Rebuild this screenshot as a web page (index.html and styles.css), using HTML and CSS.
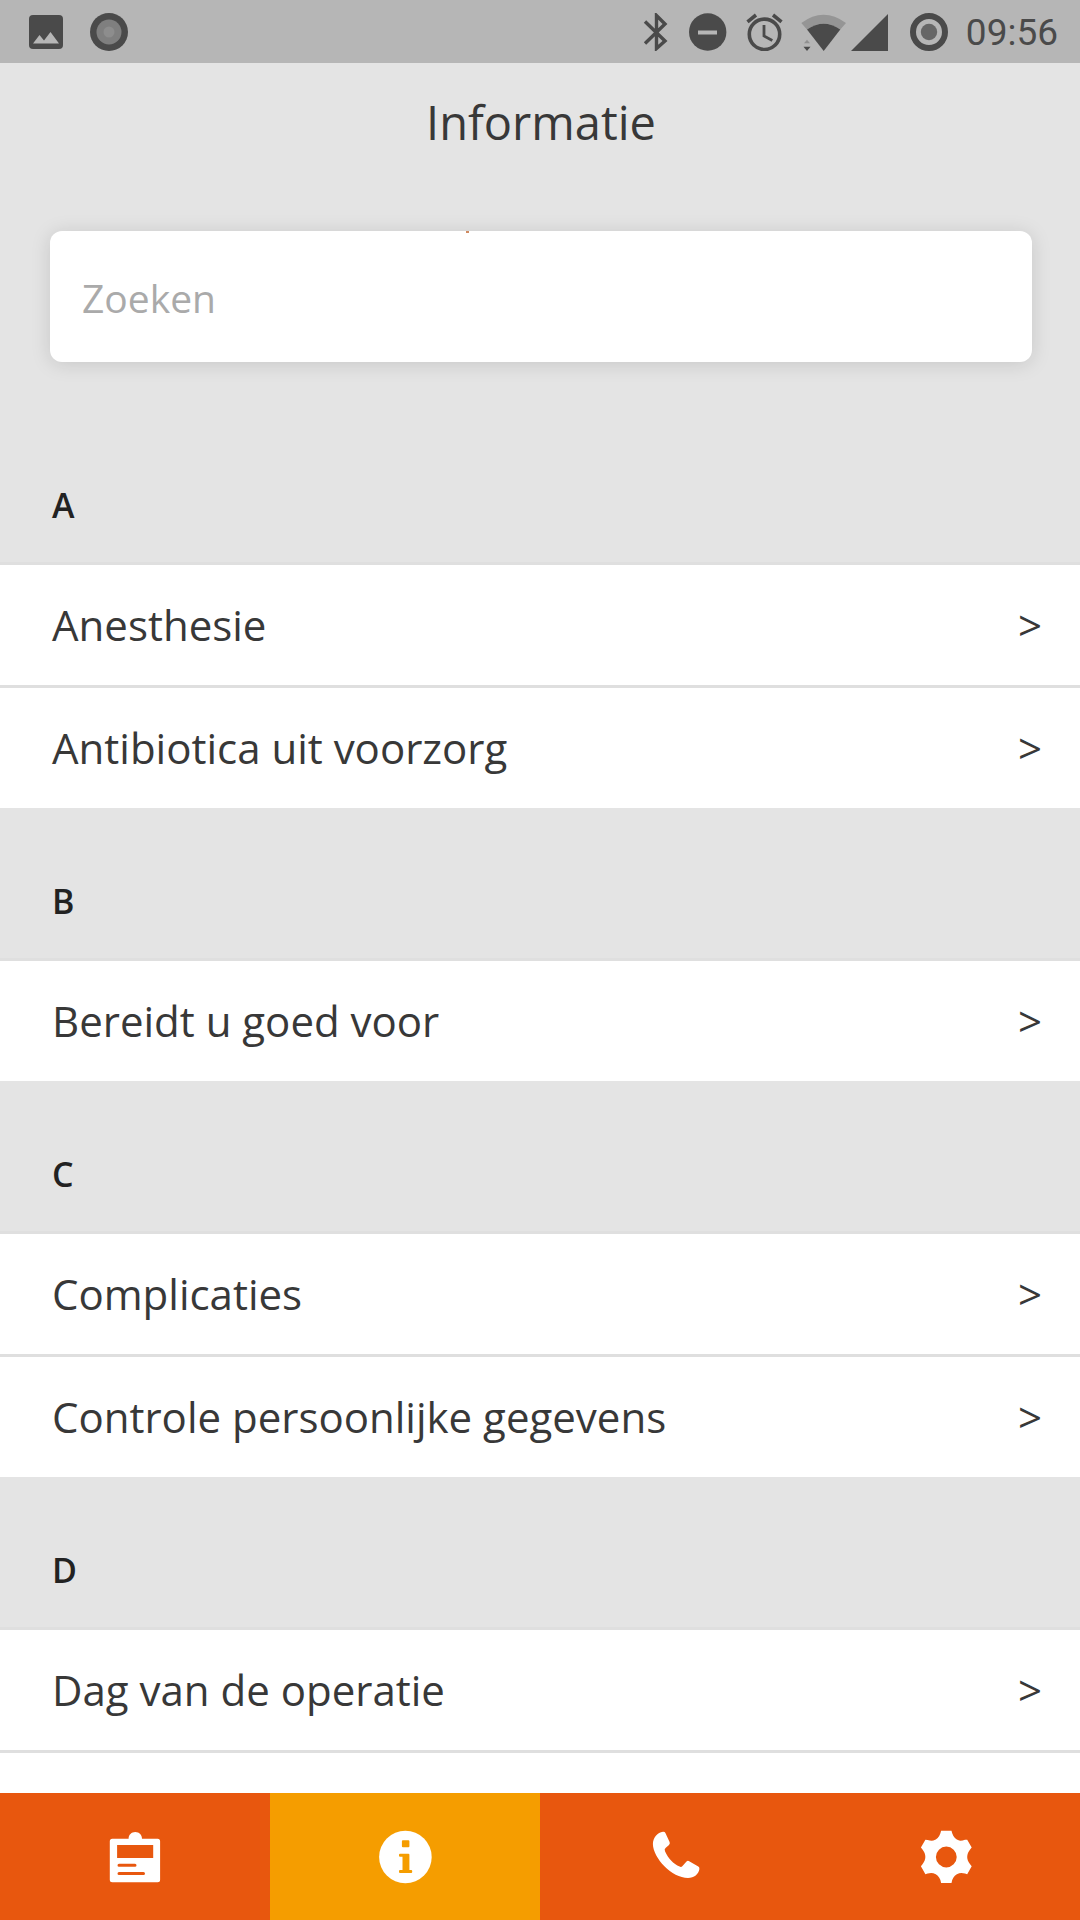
FILE: index.html
```html
<!DOCTYPE html>
<html lang="nl">
<head>
<meta charset="utf-8">
<meta name="viewport" content="width=device-width, initial-scale=1">
<title>Informatie</title>
<link rel="stylesheet" href="styles.css">
</head>
<body>
<div class="app">
  <div class="status-bar">
    <div class="status-group status-left">
      <svg width="34" height="34" viewBox="0 0 34 34" aria-hidden="true"><rect width="34" height="34" rx="4" fill="#4a4a4a"/><path d="M4 28.500 10.500 20l4.500 5.500L21.500 17 30 28.500z" fill="#b6b6b6"/></svg>
      <svg width="38" height="38" viewBox="0 0 38 38" aria-hidden="true"><circle cx="19" cy="19" r="19" fill="#4a4a4a"/><circle cx="19" cy="19" r="12.500" fill="#7f7f7f"/><circle cx="19" cy="19" r="5.500" fill="#8d8d8d"/></svg>
    </div>
    <div class="status-group">
      <svg width="28" height="38" viewBox="0 0 28 38" aria-hidden="true"><path d="M2 8.500 22 28l-8.500 7.500v-33L22 11 2 30.500" fill="none" stroke="#4a4a4a" stroke-width="3.400"/></svg>
      <svg width="38" height="38" viewBox="0 0 38 38" aria-hidden="true"><circle cx="18.700" cy="19" r="18.700" fill="#4a4a4a"/><path d="M9 19.500h19" stroke="#b6b6b6" stroke-width="4"/></svg>
      <svg width="38" height="38" viewBox="0 0 38 38" aria-hidden="true"><g fill="none" stroke="#4a4a4a" stroke-width="3.600"><circle cx="19.500" cy="21.300" r="15.200"/><path d="M19 12v11l8.300 4.500" stroke-width="2.800"/><path d="M2.500 8.800l8.500-6.800M28 2l8.500 6.800"/></g></svg>
      <svg width="91" height="38" viewBox="0 0 91 38" aria-hidden="true"><path d="M.3 10Q22.500-6.500 45 10L39.300 16.500Q22.700 5 6 16.500z" fill="#959595"/><path d="M6 16.500Q22.700 5 39.300 16.500L22.700 38z" fill="#4a4a4a"/><path d="M3 30.300h6L6 26.700z" fill="#909090"/><path d="M2.500 33.700h7L6 38z" fill="#4a4a4a"/><path d="M50 38 87 1v37z" fill="#4a4a4a"/></svg>
      <svg width="38" height="38" viewBox="0 0 38 38" aria-hidden="true"><circle cx="19" cy="19" r="16" fill="none" stroke="#4a4a4a" stroke-width="6"/><circle cx="19" cy="19" r="8.200" fill="#666"/></svg>
      <time class="clock">09:56</time>
    </div>
  </div>

  <header class="header">
    <h1 class="title">Informatie</h1>
    <div class="search">
      <input class="search-input" type="search" placeholder="Zoeken" aria-label="Zoeken">
      <span class="search-mark"></span>
    </div>
  </header>

  <main class="index">
    <section class="group">
      <h2 class="letter">A</h2>
      <ul class="rows">
        <li><a class="row" href="#anesthesie"><span>Anesthesie</span><span class="arrow">&gt;</span></a></li>
        <li><a class="row" href="#antibiotica"><span>Antibiotica uit voorzorg</span><span class="arrow">&gt;</span></a></li>
      </ul>
    </section>
    <section class="group">
      <h2 class="letter">B</h2>
      <ul class="rows">
        <li><a class="row" href="#bereidt"><span>Bereidt u goed voor</span><span class="arrow">&gt;</span></a></li>
      </ul>
    </section>
    <section class="group">
      <h2 class="letter">C</h2>
      <ul class="rows">
        <li><a class="row" href="#complicaties"><span>Complicaties</span><span class="arrow">&gt;</span></a></li>
        <li><a class="row" href="#controle"><span>Controle persoonlijke gegevens</span><span class="arrow">&gt;</span></a></li>
      </ul>
    </section>
    <section class="group group-last">
      <h2 class="letter">D</h2>
      <ul class="rows">
        <li><a class="row" href="#dag"><span>Dag van de operatie</span><span class="arrow">&gt;</span></a></li>
      </ul>
    </section>
  </main>

  <nav class="tabs">
    <a class="tab" href="#dossier" aria-label="Dossier">
      <svg width="54" height="54" viewBox="0 0 54 54" aria-hidden="true"><path fill="#fff" fill-rule="evenodd" d="M4.300 8.700H20.600C20.600 4.800 23.500 2 27.300 2s6.700 2.800 6.700 6.700h15.600q2.500 0 2.500 2.500v38.600q0 2.500-2.500 2.500H4.300q-2.500 0-2.500-2.500V11.200q0-2.500 2.500-2.500zM9.100 15v13h36.100V15zM11 33.700a1.500 1.500 0 0 0 0 3h16a1.500 1.500 0 0 0 0-3zM11 42a1.500 1.500 0 0 0 0 3h24.500a1.500 1.500 0 0 0 0-3z"/></svg>
    </a>
    <a class="tab tab-active" href="#informatie" aria-label="Informatie" aria-current="page">
      <svg width="54" height="54" viewBox="0 0 54 54" aria-hidden="true"><circle cx="27.400" cy="27" r="26.300" fill="#fff"/><path fill="#f59d00" d="M24.900 10.300h5.500q1 0 1 1v5q0 1-1 1h-5.500q-1 0-1-1v-5q0-1 1-1zM22 23.700h8.400q1 0 1 1V40h1.800q1 0 1 1v1q0 1-1 1H22q-1 0-1-1v-1q0-1 1-1h2.500V26.700H22q-1 0-1-1v-1q0-1 1-1z"/></svg>
    </a>
    <a class="tab" href="#contact" aria-label="Contact">
      <svg width="54" height="54" viewBox="0 0 54 54" aria-hidden="true"><path fill="#fff" d="M15 1.700Q16.800 1.500 17.400 3L21.600 12Q22.300 13.700 21 14.900L17.800 17.800Q16 19 17 21.200C20 28 25.500 34 31.600 36.600Q33.300 37.400 34.500 36L38.500 31.500Q39.700 30.300 41.200 31.200L50.300 36.600Q51.600 37.300 51.400 39C50.800 44 46 48 40 48C24 48 5 28 4.900 14C5 7.500 9.500 2.200 15 1.700z"/></svg>
    </a>
    <a class="tab" href="#instellingen" aria-label="Instellingen">
      <svg width="54" height="54" viewBox="0 0 54 54" aria-hidden="true"><path fill="#fff" fill-rule="evenodd" d="M23.100.7H33.500L34.200 3.300Q36 9 41.200 10.500Q43.500 11 47 9.700L49.200 9.700L53.700 17.500L52.300 19.300C48.200 24.500 48.200 29.500 52.300 34.500L53.700 36.200L49.200 44.300L47 43.500Q43.500 42.700 41.200 43.300Q36 45 34.200 50L33.500 53H23.100L22.400 50Q20.600 45 15.400 43.300Q13 42.700 9.600 43.500L7.400 44.300L2.900 36.200L4.300 34.500C8.400 29.500 8.400 24.500 4.300 19.300L2.900 17.500L7.400 9.700L9.600 10Q13 11 15.400 10.500Q20.600 9 22.400 3.300zM28.300 16.600a10.400 10.400 0 1 0 0 20.800a10.400 10.400 0 1 0 0-20.800z"/></svg>
    </a>
  </nav>
</div>
</body>
</html>
```
FILE: styles.css
```css
*, *::before, *::after {
  box-sizing: border-box;
}

body {
  margin: 0;
  background: #e4e4e4;
  color: #383838;
  font-family: "Open Sans", "Noto Sans", sans-serif;
}

svg {
  display: block;
  flex: none;
}

.app {
  display: flex;
  flex-direction: column;
  height: 100vh;
}

.status-bar {
  display: flex;
  justify-content: space-between;
  align-items: center;
  flex: none;
  height: 63px;
  padding: 0 22px 0 29px;
  background: #b6b6b6;
}

.status-group {
  display: flex;
  align-items: center;
  gap: 18px;
}

.status-left {
  gap: 27px;
}

.clock {
  padding-top: 3px;
  color: #4a4a4a;
  font: 37px/40px Roboto, sans-serif;
}

.header {
  flex: none;
  padding: 25px 48px 0 50px;
}

.title {
  margin: 0 0 75px;
  font-size: 47px;
  line-height: 68px;
  font-weight: 400;
  text-align: center;
}

.search {
  position: relative;
}

.search-input {
  display: block;
  width: 100%;
  height: 131px;
  padding: 2px 32px 0;
  border: 0;
  border-radius: 12px;
  outline: 0;
  background: #fff;
  box-shadow: 0 2px 20px rgba(0, 0, 0, 0.13);
  color: #383838;
  font-family: inherit;
  font-size: 39px;
  appearance: none;
}

.search-input::placeholder {
  color: #aaa;
  opacity: 1;
}

.search-mark {
  position: absolute;
  top: 0;
  left: 416px;
  width: 3px;
  height: 2px;
  background: #d08a60;
}

.index {
  display: flex;
  flex: 1;
  flex-direction: column;
  min-height: 0;
  padding-top: 50px;
  overflow: hidden;
}

.group {
  display: flex;
  flex: none;
  flex-direction: column;
}

.group-last {
  flex: 1 0 auto;
}

.group-last .rows {
  flex: 1;
}

.group-last .row {
  border-bottom: 3px solid #dfdfdf;
}

.letter {
  margin: 0;
  height: 150px;
  padding: 69px 52px 0;
  color: #222;
  font-size: 34px;
  line-height: 48px;
  font-weight: 600;
}

.rows {
  margin: 0;
  padding: 0;
  background: #fff;
  list-style: none;
}

.row {
  display: flex;
  justify-content: space-between;
  align-items: center;
  padding: 30px 38px 30px 52px;
  border-top: 3px solid #dfdfdf;
  color: #383838;
  font-size: 42px;
  line-height: 60px;
  text-decoration: none;
}

.tabs {
  display: grid;
  grid-template-columns: repeat(4, 1fr);
  flex: none;
}

.tab {
  display: flex;
  justify-content: center;
  padding: 37px 0 36px;
  background: #e8570e;
}

.tab-active {
  background: #f59d00;
}
```
